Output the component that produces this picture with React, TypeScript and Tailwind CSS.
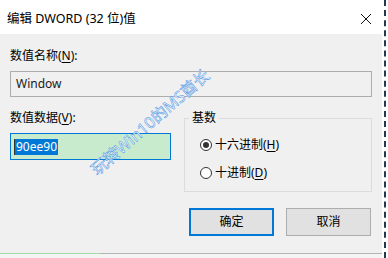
export default function App() {
  const font = { fontFamily: '"Noto Sans", "Noto Sans CJK SC", sans-serif' };

  return (
    <div className="relative flex h-[258px] w-[388px] overflow-hidden bg-white text-[12px] leading-[16px] text-black" style={font}>
      <div className="flex w-[382px] flex-col">
        {/* title bar */}
        <div className="flex h-[34px] items-center justify-between bg-white pl-[7px] pr-[10px]">
          <span className="pt-[4px] text-[12.5px]">编辑 DWORD (32 位)值</span>
          <svg width="12" height="12" viewBox="0 0 12 12" className="mt-[4px]">
            <path d="M1 1 L11 11 M11 1 L1 11" stroke="#111" strokeWidth="1" />
          </svg>
        </div>

        {/* body */}
        <div className="flex flex-1 flex-col bg-[#f0f0f0] px-[10px] pt-[14px]">
          <div>
            数值名称(<span className="underline underline-offset-2">N</span>):
          </div>
          <div className="mt-[7px] flex h-[26px] items-center border border-[#adadad] bg-[#f0f0f0] pl-[5px] text-[#1a1a1a]">
            Window
          </div>

          <div className="mt-[13px] flex">
            <div className="flex w-[161px] flex-col">
              <div>
                数值数据(<span className="underline underline-offset-2">V</span>):
              </div>
              <div className="mt-[7px] flex h-[27px] items-center border border-[#0078d7] bg-[#c8ebce] pl-[3px]">
                <span className="border-l border-[#333] bg-[#0078d7] pl-[1px] pr-[1px] leading-[16px] text-white">90ee90</span>
              </div>
            </div>

            <fieldset className="ml-[13px] w-[188px] border border-[#dcdcdc] pb-[10px]">
              <legend className="ml-[4px] px-[3px] leading-[16px]">基数</legend>
              <div className="mt-[11px] flex items-center gap-[3px] pl-[15px]">
                <span className="flex h-[12px] w-[12px] items-center justify-center rounded-full border border-[#333] bg-white">
                  <span className="h-[6px] w-[6px] rounded-full bg-[#333]" />
                </span>
                <span>
                  十六进制(<span className="underline underline-offset-2">H</span>)
                </span>
              </div>
              <div className="mt-[12px] flex items-center gap-[3px] pl-[15px]">
                <span className="h-[12px] w-[12px] rounded-full border border-[#333] bg-white" />
                <span>
                  十进制(<span className="underline underline-offset-2">D</span>)
                </span>
              </div>
            </fieldset>
          </div>

          <div className="mt-[16px] flex justify-end gap-[12px] pr-[1px]">
            <button className="flex h-[28px] w-[85px] items-center justify-center border-2 border-[#0078d7] bg-[#e1e1e1]">
              确定
            </button>
            <button className="flex h-[28px] w-[85px] items-center justify-center border border-[#adadad] bg-[#e1e1e1]">
              取消
            </button>
          </div>
        </div>

        <div className="flex h-[1px]">
          <div className="w-[100px] bg-[#9fdca4]" />
          <div className="flex-1 bg-[#b4b4b4]" />
        </div>
        <div className="h-[4px] bg-[#f4f4f4]" />
      </div>

      {/* right edge of background */}
      <div className="flex w-[6px] flex-col bg-white pl-[2px]">
        <div className="h-full border-l-2 border-dashed border-[#23384f]" />
      </div>

      {/* watermark */}
      <div className="pointer-events-none absolute left-[150px] top-[122px] -translate-x-1/2 -translate-y-1/2 -rotate-[41deg] whitespace-nowrap text-[16px] leading-[20px] text-white [-webkit-text-stroke:0.5px_#3d8ee2]">
        玩转Win10的MS酋长
      </div>
    </div>
  );
}
